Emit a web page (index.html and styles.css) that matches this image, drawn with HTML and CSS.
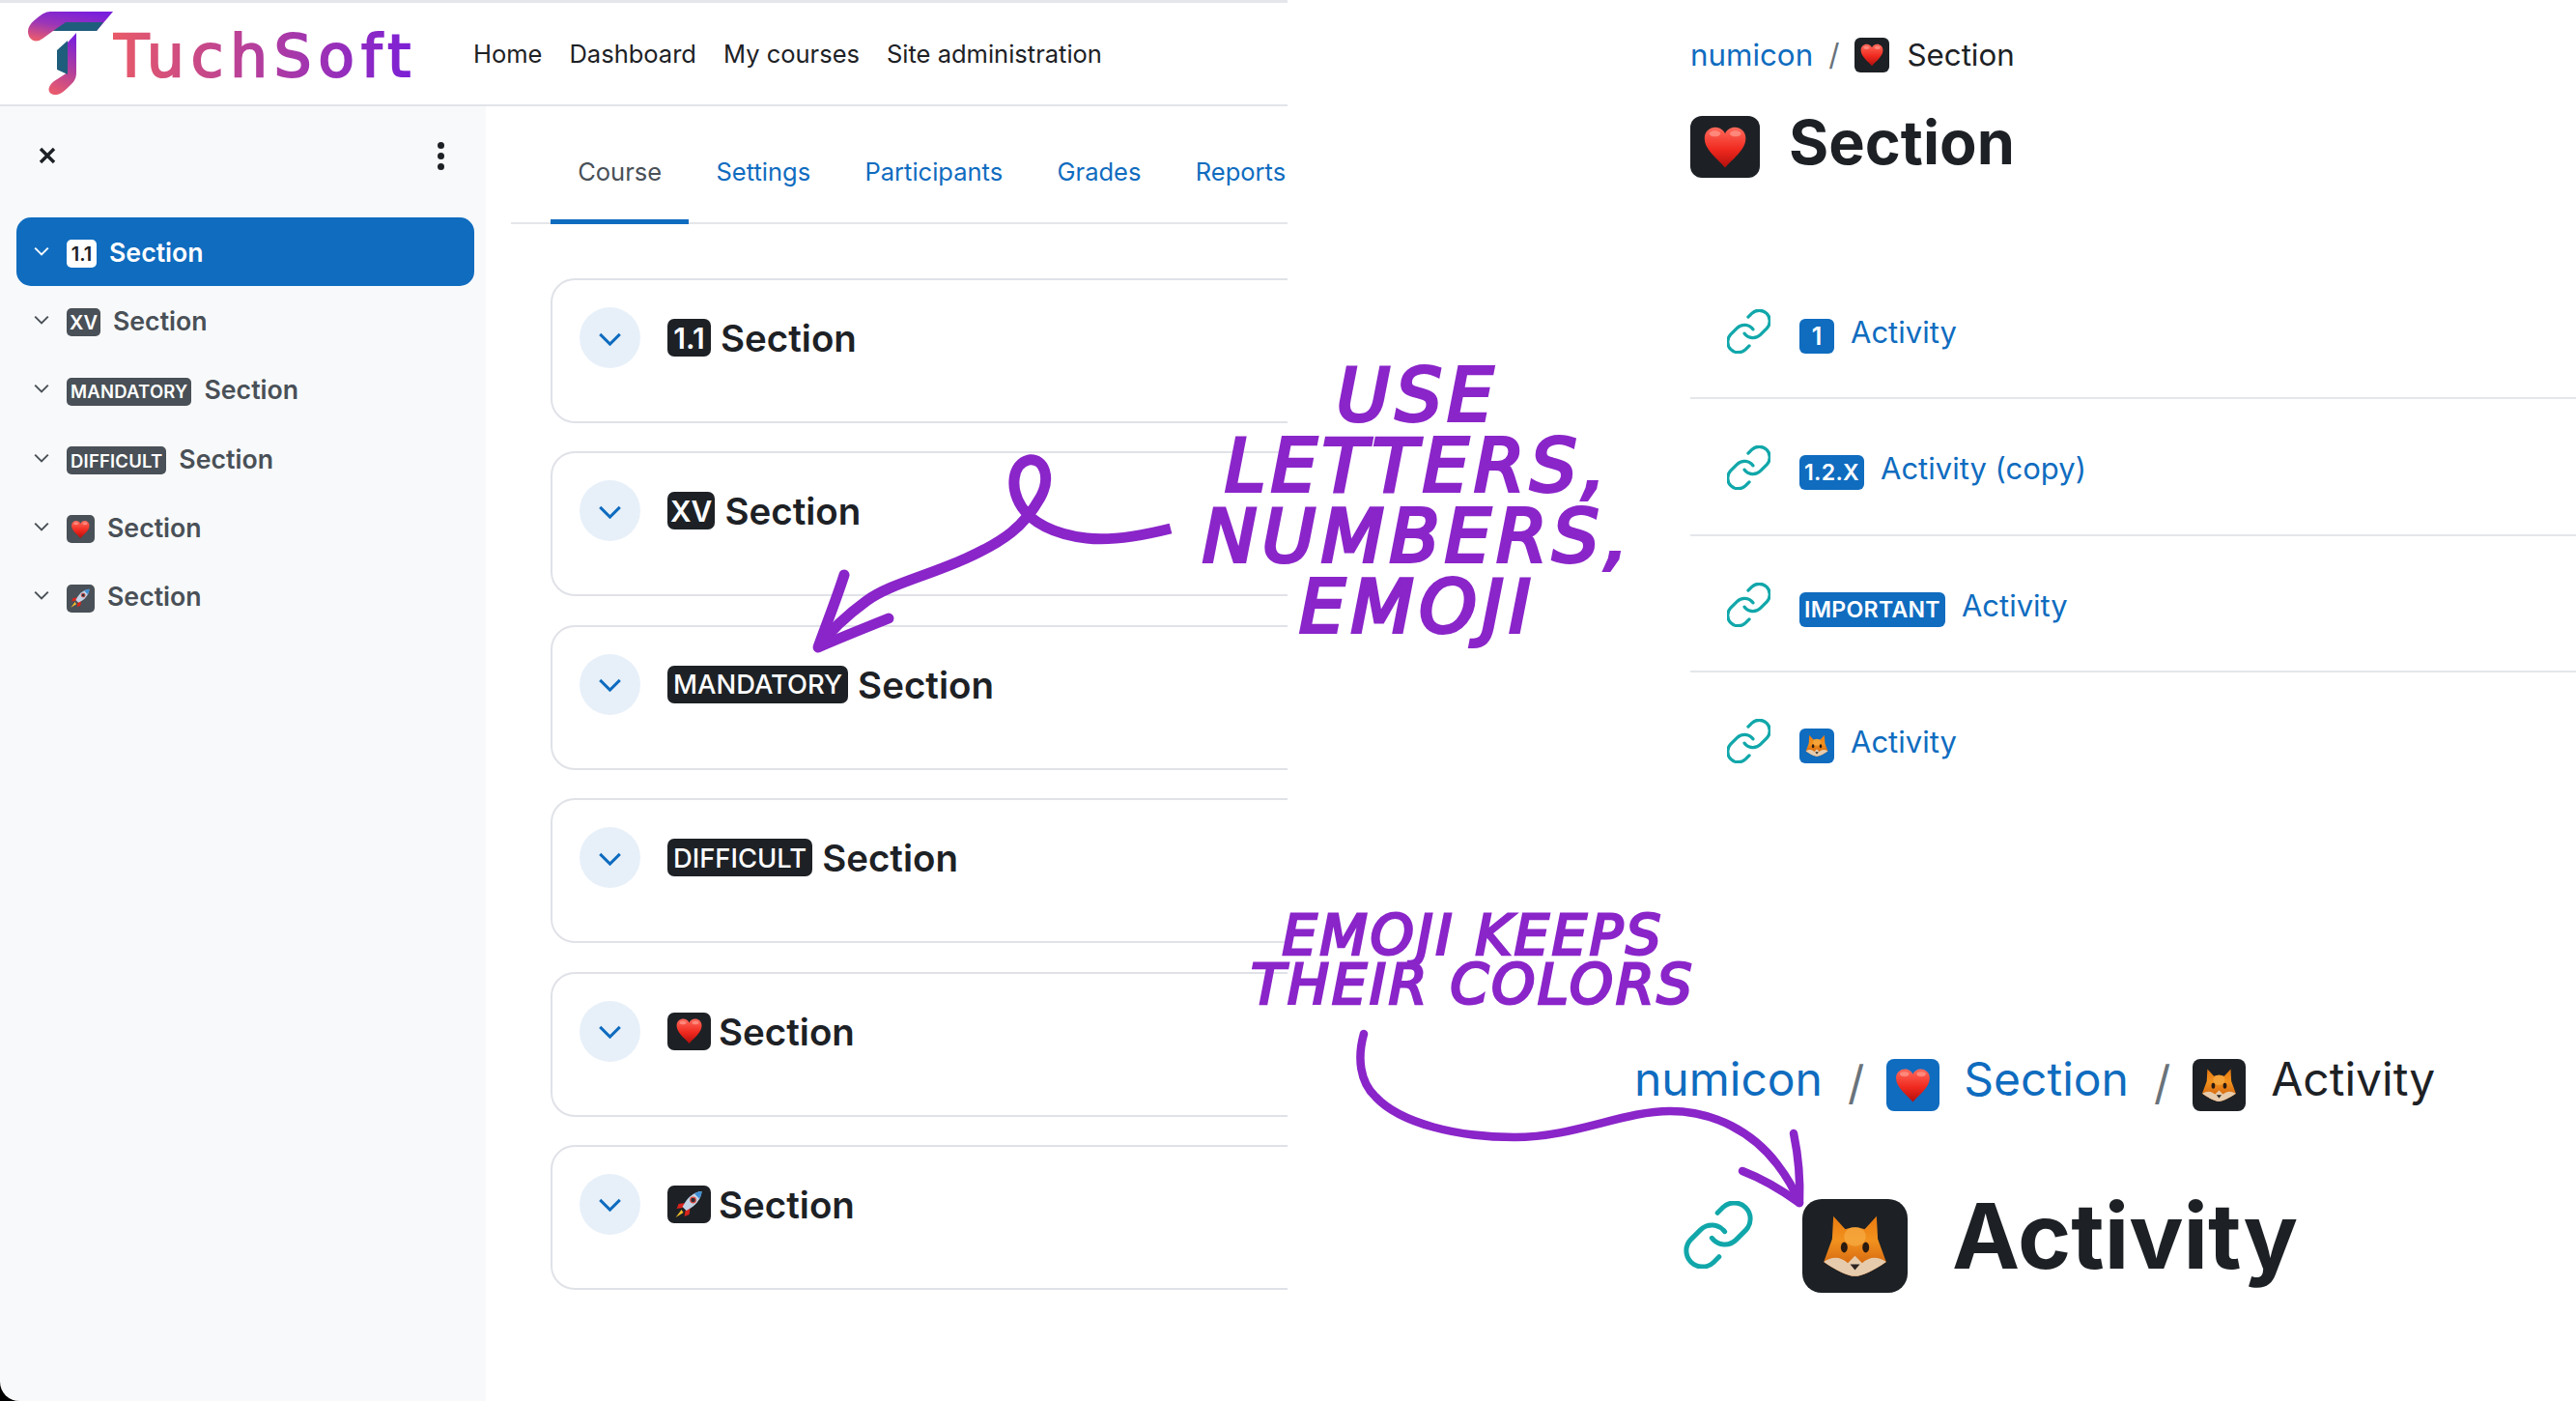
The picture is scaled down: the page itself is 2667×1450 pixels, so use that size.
FILE: index.html
```html
<!DOCTYPE html>
<html lang="en">
<head>
<meta charset="utf-8">
<title>TuchSoft numicon</title>
<link rel="stylesheet" href="styles.css">
</head>
<body>
<svg class="defs" width="0" height="0" aria-hidden="true">
  <defs>
    <linearGradient id="gHeart" x1="0" y1="0" x2="0" y2="1">
      <stop offset="0" stop-color="#ff6a5c"/><stop offset=".55" stop-color="#f0291f"/><stop offset="1" stop-color="#b30f0c"/>
    </linearGradient>
    <linearGradient id="gFox" x1="0" y1="0" x2="0" y2="1">
      <stop offset="0" stop-color="#e8790f"/><stop offset=".4" stop-color="#f2921e"/><stop offset="1" stop-color="#c9560a"/>
    </linearGradient>
    <linearGradient id="gLogoA" x1="0.7" y1="0" x2="0.2" y2="1">
      <stop offset="0" stop-color="#7a1fdc"/><stop offset=".5" stop-color="#9a35b8"/><stop offset="1" stop-color="#e85a6e"/>
    </linearGradient>
    <linearGradient id="gLogoB" x1="0.6" y1="0" x2="0.4" y2="1">
      <stop offset="0" stop-color="#7a1fdc"/><stop offset=".55" stop-color="#b23f9c"/><stop offset="1" stop-color="#e85a6e"/>
    </linearGradient>
    <symbol id="heart" viewBox="0 0 32 32">
      <path d="M16 29 C12 24 3 18 3 10.500 C3 6 6.500 3.500 9.800 3.500 C12.500 3.500 15 5 16 7.500 C17 5 19.500 3.500 22.200 3.500 C25.500 3.500 29 6 29 10.500 C29 18 20 24 16 29 Z" fill="url(#gHeart)"/>
      <ellipse cx="9.500" cy="7.500" rx="3.500" ry="1.800" fill="#ff9c90" opacity=".7"/>
      <ellipse cx="22.500" cy="7.500" rx="3.500" ry="1.800" fill="#ff9c90" opacity=".7"/>
    </symbol>
    <symbol id="fox" viewBox="0 0 32 32">
      <path d="M7 3.500 L12 9 C14.500 8 17.500 8 20 9 L25 3.500 L25.500 13 L29 22.500 C24 26 19 28.500 16 28.500 C13 28.500 8 26 3 22.500 L6.500 13 Z" fill="url(#gFox)"/>
      <ellipse cx="16" cy="12" rx="4.500" ry="4" fill="#f7ac45" opacity=".7"/>
      <path d="M3 22.500 C7 20 10 20.500 13 23 L16 20 L19 23 C22 20.500 25 20 29 22.500 C24 26 19 28.500 16 28.500 C13 28.500 8 26 3 22.500 Z" fill="#e6cbac"/>
      <ellipse cx="11.500" cy="16.500" rx="1.400" ry="2.200" fill="#2a1a10"/>
      <ellipse cx="20.500" cy="16.500" rx="1.400" ry="2.200" fill="#2a1a10"/>
      <path d="M14 23.500 H18 L16 26 Z" fill="#2a2422"/>
    </symbol>
    <symbol id="rocket" viewBox="0 0 32 32">
      <path d="M12 15 L5 16 L3 21 L9 20 Z" fill="#d8231c"/>
      <path d="M17 20 L16 27 L11 29 L12 23 Z" fill="#d8231c"/>
      <path d="M8 22 L2 30 L10 25 Z" fill="#f6c12d"/>
      <path d="M29 3 C22 3.500 16 8 12 14 L9 19 L13 23 L18 20 C24 16 28.500 10 29 3 Z" fill="#c3d3e6"/>
      <path d="M29 3 C26 3.200 23.500 4 21.500 5.500 L26.500 10.500 C28 8.500 28.800 6 29 3 Z" fill="#3f8fd6"/>
      <circle cx="20" cy="12" r="2.800" fill="#2a2f3a" stroke="#e14b3d" stroke-width="1.200"/>
    </symbol>
    <symbol id="link" viewBox="2 1.500 20 21">
      <path d="M10 13a5 5 0 0 0 7.540.540l3-3a5 5 0 0 0-7.070-7.070l-1.720 1.710" fill="none" stroke="#11a7aa" stroke-width="1.500" stroke-linecap="round"/>
      <path d="M14 11a5 5 0 0 0-7.540-.540l-3 3a5 5 0 0 0 7.070 7.070l1.710-1.710" fill="none" stroke="#11a7aa" stroke-width="1.500" stroke-linecap="round"/>
    </symbol>
    <symbol id="chev" viewBox="0 0 26 15">
      <path d="M2 2 L13 13 L24 2" fill="none" stroke="currentColor" stroke-width="3.200"/>
    </symbol>
  </defs>
</svg>

<div class="collage">
  <section class="window">
    <header class="topbar">
      <div class="logo">
        <svg class="logo-mark" viewBox="0 0 100 100" aria-hidden="true">
          <path d="M52 12 H117 L100 32 H55 L44 40 C36 46 29 40 29 33 C29 27 33 23 38 19 C43 15 47 12 52 12 Z" fill="url(#gLogoA)"/>
          <path d="M68 23 H107 L100 32 H55 Z" fill="#1f5d7d"/>
          <path d="M79 34 L70 44 V75 L56 84 C47 91 50 99 59 98 C64 97 68 93 73 88 C77 84 79 81 79 75 Z" fill="url(#gLogoB)"/>
          <path d="M70 42 L59 52 V72 L70 77 Z" fill="#1f5d7d"/>
        </svg>
        <span class="logo-text">TuchSoft</span>
      </div>
      <nav class="topnav">
        <a>Home</a><a>Dashboard</a><a>My courses</a><a>Site administration</a>
      </nav>
    </header>
    <div class="workspace">
      <aside class="sidebar">
        <div class="side-tools">
          <svg class="side-x" viewBox="0 0 18 18" aria-hidden="true"><path d="M2 2 L16 16 M16 2 L2 16" fill="none" stroke="#1d2125" stroke-width="3.400"/></svg>
          <span class="side-dots"><i></i><i></i><i></i></span>
        </div>
        <ul class="side-list">
          <li class="side-item is-active"><svg class="side-chev"><use href="#chev"/></svg><span class="tag tag-s">1.1</span><span>Section</span></li>
          <li class="side-item"><svg class="side-chev"><use href="#chev"/></svg><span class="tag tag-s">XV</span><span>Section</span></li>
          <li class="side-item"><svg class="side-chev"><use href="#chev"/></svg><span class="tag tag-s tag-word">MANDATORY</span><span>Section</span></li>
          <li class="side-item"><svg class="side-chev"><use href="#chev"/></svg><span class="tag tag-s tag-word">DIFFICULT</span><span>Section</span></li>
          <li class="side-item"><svg class="side-chev"><use href="#chev"/></svg><span class="tag tag-s tag-emoji"><svg class="emo"><use href="#heart"/></svg></span><span>Section</span></li>
          <li class="side-item"><svg class="side-chev"><use href="#chev"/></svg><span class="tag tag-s tag-emoji"><svg class="emo"><use href="#rocket"/></svg></span><span>Section</span></li>
        </ul>
      </aside>
      <main class="course">
        <nav class="tabs">
          <a class="tab is-current">Course</a><a class="tab">Settings</a><a class="tab">Participants</a><a class="tab">Grades</a><a class="tab">Reports</a>
        </nav>
        <div class="cards">
          <article class="card"><span class="circle"><svg class="circle-chev"><use href="#chev"/></svg></span><span class="tag tag-m">1.1</span><h3>Section</h3></article>
          <article class="card"><span class="circle"><svg class="circle-chev"><use href="#chev"/></svg></span><span class="tag tag-m">XV</span><h3>Section</h3></article>
          <article class="card"><span class="circle"><svg class="circle-chev"><use href="#chev"/></svg></span><span class="tag tag-m tag-word">MANDATORY</span><h3>Section</h3></article>
          <article class="card"><span class="circle"><svg class="circle-chev"><use href="#chev"/></svg></span><span class="tag tag-m tag-word">DIFFICULT</span><h3>Section</h3></article>
          <article class="card"><span class="circle"><svg class="circle-chev"><use href="#chev"/></svg></span><span class="tag tag-m tag-emoji"><svg class="emo"><use href="#heart"/></svg></span><h3>Section</h3></article>
          <article class="card"><span class="circle"><svg class="circle-chev"><use href="#chev"/></svg></span><span class="tag tag-m tag-emoji"><svg class="emo"><use href="#rocket"/></svg></span><h3>Section</h3></article>
        </div>
      </main>
    </div>
  </section>

  <section class="panel-section">
    <div class="crumbs">
      <a>numicon</a><span class="slash">/</span><span class="tag tag-crumb"><svg class="emo"><use href="#heart"/></svg></span><span class="crumb-now">Section</span>
    </div>
    <h1 class="page-title"><span class="tag tag-title"><svg class="emo"><use href="#heart"/></svg></span><span class="title-text">Section</span></h1>
    <ul class="activities">
      <li class="activity"><svg class="link-ico"><use href="#link"/></svg><span class="tag tag-blue">1</span><a>Activity</a></li>
      <li class="activity"><svg class="link-ico"><use href="#link"/></svg><span class="tag tag-blue tag-word">1.2.X</span><a>Activity (copy)</a></li>
      <li class="activity"><svg class="link-ico"><use href="#link"/></svg><span class="tag tag-blue tag-word">IMPORTANT</span><a>Activity</a></li>
      <li class="activity"><svg class="link-ico"><use href="#link"/></svg><span class="tag tag-blue tag-emoji"><svg class="emo"><use href="#fox"/></svg></span><a>Activity</a></li>
    </ul>
  </section>

  <section class="panel-activity">
    <div class="crumbs-big">
      <a>numicon</a><span class="slash">/</span><span class="tag tag-crumb-blue"><svg class="emo"><use href="#heart"/></svg></span><a>Section</a><span class="slash">/</span><span class="tag tag-crumb-dark"><svg class="emo"><use href="#fox"/></svg></span><span class="crumb-now">Activity</span>
    </div>
    <h1 class="big-title"><svg class="link-big"><use href="#link"/></svg><span class="tag tag-huge"><svg class="emo"><use href="#fox"/></svg></span><span class="big-text">Activity</span></h1>
  </section>

  <div class="note note-one">USE<br>LETTERS,<br>NUMBERS,<br>EMOJI</div>
  <div class="note note-two">EMOJI KEEPS<br>THEIR COLORS</div>
  <svg class="arrows" viewBox="0 0 2667 1450" aria-hidden="true">
    <g fill="none" stroke="#8a25c9" stroke-linecap="round" stroke-linejoin="round">
      <path stroke-width="11" stroke-linecap="butt" d="M1212 547 C1180 555 1150 560 1125 557 C1090 553 1068 540 1058 525 C1045 505 1048 480 1065 476 C1082 474 1088 495 1077 515 C1060 545 1040 560 1000 578 C960 596 920 605 897 622 C875 638 858 655 847 670"/>
      <path stroke-width="11" d="M874 595 C866 620 856 645 847 670 C870 660 895 650 920 640"/>
      <path stroke-width="8.500" d="M1412 1070 C1405 1095 1408 1120 1424 1135 C1450 1163 1510 1177 1568 1177 C1630 1177 1680 1150 1729 1150 C1775 1150 1815 1172 1840 1205 C1850 1218 1858 1232 1863 1245"/>
      <path stroke-width="8.500" d="M1857 1173 C1862 1197 1864 1222 1863 1245 C1845 1232 1825 1220 1804 1212"/>
    </g>
  </svg>
</div>
</body>
</html>
```

FILE: styles.css
```css
* { box-sizing: border-box; }
html, body { margin: 0; padding: 0; background: #fff; }
body { font-family: Inter, "Noto Sans", sans-serif; color: #1d2125; overflow: hidden; }
ul { list-style: none; margin: 0; padding: 0; }
h1, h3 { margin: 0; }
a { color: #0f6cbf; text-decoration: none; }
.defs { position: absolute; }
.emo { display: block; width: 78%; height: 82%; }

.collage { position: relative; width: 2667px; height: 1450px; overflow: hidden; background: #fff; }

/* left window */
.window { position: absolute; left: 0; top: 0; width: 1333px; height: 1450px; display: flex; flex-direction: column; overflow: hidden; }
.topbar { height: 110px; flex: none; border-top: 3px solid #e4e6ec; border-bottom: 2px solid #e2e4ea; display: flex; align-items: center; position: relative; }
.logo { width: 490px; height: 105px; flex: none; display: flex; position: relative; }
.logo-mark { position: absolute; left: 0; top: -3px; width: 100px; height: 100px; overflow: visible; }
.logo-text { position: absolute; left: 117px; top: 17px; font-family: "DejaVu Sans", sans-serif; font-size: 61px; line-height: 76px; letter-spacing: 7px; background: linear-gradient(90deg, #e85a68, #7a1fd8); -webkit-background-clip: text; background-clip: text; color: transparent; -webkit-text-stroke: 2.200px transparent; }
.topnav { display: flex; gap: 28px; font-size: 25.500px; }
.topnav a { color: #1d2125; }

.workspace { flex: 1; display: flex; min-height: 0; background: linear-gradient(#000, #000) left bottom / 20px 20px no-repeat; }
.sidebar { width: 503px; flex: none; background: #f8f9fa; padding: 0 12px 0 17px; border-bottom-left-radius: 20px; }
.side-tools { height: 115px; display: flex; align-items: flex-start; justify-content: space-between; padding: 42px 31px 0 23px; }
.side-x { width: 18px; height: 18px; }
.side-dots { display: flex; flex-direction: column; gap: 4px; margin-top: -5px; }
.side-dots i { display: block; width: 7px; height: 7px; border-radius: 50%; background: #1d2125; }
.side-list { display: flex; flex-direction: column; }
.side-item { height: 71.300px; display: flex; align-items: center; padding-left: 18px; font-size: 26.700px; font-weight: 600; color: #495057; border-radius: 15px; gap: 13px; }
.side-item.is-active { background: #0f6cbf; color: #fff; }
.side-chev { width: 16px; height: 10px; margin-right: 5px; margin-top: -2px; color: #495057; overflow: visible; }
.is-active .side-chev { color: #fff; }

.tag { display: inline-flex; align-items: center; justify-content: center; flex: none; font-weight: 600; }
.tag-s { height: 29px; min-width: 31px; padding: 0 3px; border-radius: 5px; background: #495057; color: #fff; font-size: 20px; margin-top: 4px; }
.tag-s.tag-word { padding: 0 4px; font-size: 18.500px; letter-spacing: .2px; }
.tag-s.tag-emoji { width: 29px; min-width: 29px; padding: 0; }
.is-active .tag-s { background: #fff; color: #1d2125; }

/* main */
.course { flex: 1; min-width: 0; overflow: hidden; background: #fff; }
.tabs { margin: 0 0 0 26px; padding: 0 0 0 41px; height: 122px; border-bottom: 2px solid #e4e6ea; display: flex; align-items: flex-start; white-space: nowrap; font-size: 25.500px; }
.tab { height: 122px; padding: 48px 28.200px 0; line-height: 40px; flex: none; }
.tab.is-current { color: #495057; border-bottom: 5px solid #0f6cbf; }
.cards { padding: 56px 0 0 67px; width: 1100px; display: flex; flex-direction: column; gap: 29.400px; }
.card { height: 150px; border: 2px solid #e0e2e8; border-radius: 25px; padding: 28px 0 0 28px; display: flex; align-items: flex-start; }
.card h3 { font-size: 38.500px; font-weight: 600; line-height: 64px; margin-left: 10px; }
.circle { width: 63px; height: 63px; flex: none; border-radius: 50%; background: #e7f0f9; display: flex; align-items: center; justify-content: center; margin-right: 28px; }
.circle-chev { width: 25px; height: 14px; color: #0f6cbf; overflow: visible; margin-top: 2px; }
.tag-m { height: 39px; min-width: 45px; padding: 0 3px; margin-top: 12px; border-radius: 7px; background: #1d2125; color: #fff; font-size: 30px; }
.tag-m.tag-word { font-size: 27.400px; padding: 0 6px; font-weight: 500; }
.tag-m.tag-emoji { width: 45px; padding: 0; }
.tag-m.tag-emoji + h3 { margin-left: 8px; }

/* right top panel */
.panel-section { position: absolute; left: 1750px; top: 0; right: 0; }
.crumbs { display: flex; align-items: center; height: 36px; margin-top: 39px; font-size: 31.300px; }
.slash { color: #6a737b; font-weight: 400; }
.crumbs .slash { margin: 0 16px 0 16px; }
.tag-crumb { width: 36px; height: 36px; background: #1d2125; border-radius: 6px; margin-right: 18px; }
.crumb-now { color: #1d2125; }
.page-title { display: flex; align-items: center; height: 64px; margin-top: 45px; font-size: 63px; font-weight: 700; line-height: 64px; }
.title-text { margin-top: -10px; }
.tag-title { width: 72px; height: 64px; background: #1d2125; border-radius: 12px; margin-right: 30px; }
.activities { margin-top: 88px; }
.activity { height: 141.400px; display: flex; align-items: flex-start; padding: 48px 0 0 38px; font-size: 31px; line-height: 36px; border-bottom: 2px solid #e4e6ea; }
.activity:last-child { border-bottom: 0; }
.link-ico { width: 45px; height: 46px; flex: none; margin-right: 30px; }
.tag-blue { height: 36px; min-width: 36px; margin-top: 10px; margin-right: 17px; background: #0f6cbf; color: #fff; border-radius: 6px; font-size: 25px; }
.tag-blue.tag-word { padding: 0 5px; font-size: 23.100px; letter-spacing: .3px; }
.tag-blue.tag-emoji { width: 36px; }
.activity a { margin-top: 6px; }

/* right bottom panel */
.panel-activity { position: absolute; left: 1692px; top: 1096px; width: 975px; }
.crumbs-big { display: flex; align-items: center; height: 54px; font-size: 48px; }
.crumbs-big > a, .crumbs-big > .crumb-now { margin-top: -14px; }
.crumbs-big .slash { margin: -6px 23px 0 26px; font-size: 48px; }
.crumbs-big .tag { width: 55px; height: 54px; border-radius: 8px; }
.tag-crumb-blue { background: #0f6cbf; margin-right: 25px; }
.tag-crumb-dark { background: #1d2125; margin-right: 26px; }
.big-title { display: flex; align-items: center; margin: 91px 0 0 51px; height: 97px; font-size: 94px; font-weight: 700; line-height: 97px; }
.big-text { margin-top: -20px; }
.link-big { width: 72px; height: 70px; flex: none; margin-right: 51px; margin-top: -24px; }
.tag-huge { width: 109px; height: 97px; background: #1d2125; border-radius: 20px; margin-right: 46px; }

/* annotations */
.note { position: absolute; font-family: "DejaVu Sans", sans-serif; font-style: italic; font-weight: 400; color: #8a25c9; text-align: center; white-space: nowrap; -webkit-text-stroke: 4px #8a25c9; }
.note-one { left: 1233px; top: 373px; width: 470px; font-size: 75px; line-height: 73px; letter-spacing: 6px; }
.note-two { left: 1290px; top: 943px; width: 470px; font-size: 57px; line-height: 51px; letter-spacing: 3px; -webkit-text-stroke-width: 3px; }
.arrows { position: absolute; left: 0; top: 0; width: 2667px; height: 1450px; pointer-events: none; }
```
